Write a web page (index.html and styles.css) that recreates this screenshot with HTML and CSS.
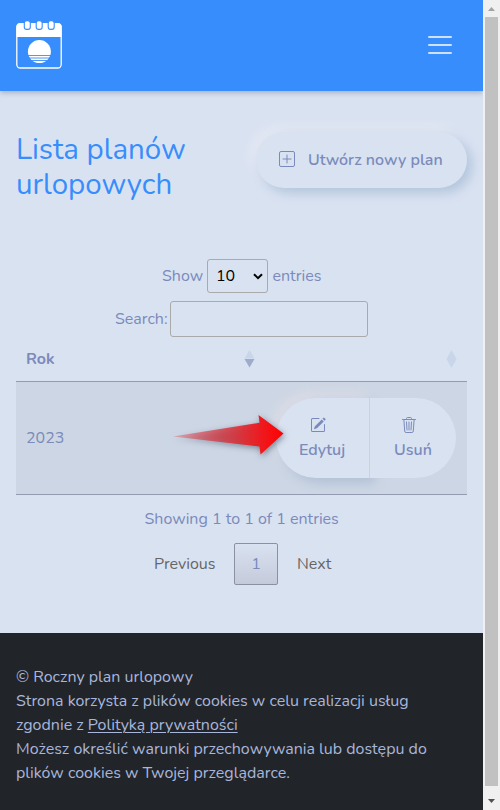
FILE: index.html
```html
<!DOCTYPE html>
<html lang="pl">
<head>
<meta charset="utf-8">
<title>Lista planów urlopowych</title>
<link rel="stylesheet" href="styles.css">
</head>
<body>
<div class="page">
  <header class="navbar">
    <svg class="logo" width="46" height="50" viewBox="0 0 46 50">
      <rect x=".8" y="3.800" width="44.400" height="44.200" rx="3.500" fill="none" stroke="#fff" stroke-width="1.300"/>
      <path d="M.5 17V6.500Q.5 3 4 3H42Q45.500 3 45.500 6.500V17Z" fill="#fff"/>
      <g fill="#fff" stroke="#388dfc" stroke-width="1.100">
        <rect x="8.300" y=".6" width="6" height="8.800" rx="2.500"/>
        <rect x="20.200" y=".6" width="6" height="8.800" rx="2.500"/>
        <rect x="32.200" y=".6" width="6" height="8.800" rx="2.500"/>
      </g>
      <circle cx="23.400" cy="31.600" r="11.500" fill="#fff"/>
      <path d="M11 35.500H36M11 38H36M11 40.500H36" stroke="#388dfc" stroke-width=".9"/>
    </svg>
    <button class="toggler" aria-label="Menu"><span></span><span></span><span></span></button>
  </header>

  <main class="content">
    <div class="title-row">
      <h1>Lista planów urlopowych</h1>
      <a class="btn-new">
        <svg width="16" height="16" viewBox="0 0 16 16" fill="none" stroke="currentColor"><rect x=".5" y=".5" width="15" height="15" rx="1.500"/><path d="M8 4v8M4 8h8" stroke-linecap="round"/></svg>
        <span>Utwórz nowy plan</span>
      </a>
    </div>

    <div class="length-row">
      <span class="t-show">Show</span>
      <div class="select"><span>10</span><svg width="10" height="7" viewBox="0 0 10 7"><path d="M1 1.200l4 4 4-4" fill="none" stroke="#000" stroke-width="2"/></svg></div>
      <span class="t-entries">entries</span>
    </div>
    <div class="search-row"><span class="t-search">Search:</span><input type="text" aria-label="Search"></div>

    <div class="table">
      <div class="thead">
        <div class="th"><span>Rok</span><svg width="11" height="18" viewBox="0 0 11 18"><path d="M5.500 0L10.500 8.500H.5Z" fill="#c9d5e8"/><path d="M5.500 17.500L10.500 9H.5Z" fill="#9eabcc"/></svg></div>
        <div class="th"><span></span><svg width="11" height="18" viewBox="0 0 11 18"><path d="M5.500 0L10.500 9L5.500 18L.5 9Z" fill="#c9d5e8"/></svg></div>
      </div>
      <div class="row">
        <span>2023</span>
        <div class="actions">
          <a class="action edit">
            <svg width="16" height="16" viewBox="0 0 16 16" fill="currentColor"><path d="M15.502 1.940a.5.5 0 0 1 0 .706L14.459 3.690l-2-2L13.502.646a.5.5 0 0 1 .707 0l1.293 1.293zm-1.750 2.456-2-2L4.939 9.210a.5.5 0 0 0-.121.196l-.805 2.414a.25.25 0 0 0 .316.316l2.414-.805a.5.5 0 0 0 .196-.12l6.813-6.814z"/><path fill-rule="evenodd" d="M1 13.500A1.500 1.500 0 0 0 2.500 15h11a1.500 1.500 0 0 0 1.500-1.500v-6a.5.5 0 0 0-1 0v6a.5.5 0 0 1-.5.5h-11a.5.5 0 0 1-.5-.5v-11a.5.5 0 0 1 .5-.5H9a.5.5 0 0 0 0-1H2.500A1.500 1.500 0 0 0 1 2.500v11z"/></svg>
            <span>Edytuj</span>
          </a>
          <a class="action delete">
            <svg width="16" height="16" viewBox="0 0 16 16" fill="none" stroke="currentColor" stroke-linecap="round" stroke-linejoin="round"><path d="M1.500 2.500h13M5.500 2.300V1.500a1 1 0 0 1 1-1h3a1 1 0 0 1 1 1v.8M2.900 2.700l.8 11.400a1.400 1.400 0 0 0 1.400 1.400h5.800a1.400 1.400 0 0 0 1.400-1.400l.8-11.400M5.500 5l.5 8M8 5v8M10.500 5l-.5 8"/></svg>
            <span>Usuń</span>
          </a>
        </div>
        <svg class="pointer" width="126" height="56" viewBox="0 0 126 56">
          <defs><linearGradient id="red"><stop offset="0" stop-color="#e8222c" stop-opacity=".25"/><stop offset=".5" stop-color="#d8323a" stop-opacity=".82"/><stop offset=".8" stop-color="#ee1a1e"/><stop offset="1" stop-color="#f00"/></linearGradient></defs>
          <path d="M8 28.500L94.500 14.800L93.500 7L118.500 25.500L95.500 46.500L94.500 38.500Z" fill="url(#red)"/>
        </svg>
      </div>
    </div>

    <div class="info">Showing 1 to 1 of 1 entries</div>
    <div class="pager"><span class="prev">Previous</span><span class="current">1</span><span class="next">Next</span></div>
  </main>

  <footer class="footer">
    <div>© Roczny plan urlopowy</div>
    <div>Strona korzysta z plików cookies w celu realizacji usług</div>
    <div>zgodnie z <a>Polityką prywatności</a></div>
    <div>Możesz określić warunki przechowywania lub dostępu do</div>
    <div>plików cookies w Twojej przeglądarce.</div>
  </footer>
</div>
<div class="scrollbar">
  <svg width="7" height="4" viewBox="0 0 7 4"><path d="M3.500 0L7 4H0Z" fill="#a3a3a3"/></svg>
  <div class="thumb"></div>
  <svg width="7" height="4" viewBox="0 0 7 4"><path d="M3.500 4L7 0H0Z" fill="#505050"/></svg>
</div>
</body>
</html>
```
FILE: styles.css
```css
* { box-sizing: border-box; }
body {
  margin: 0;
  width: 500px;
  height: 810px;
  display: grid;
  grid-template-columns: 483px 17px;
  overflow: hidden;
  background: #d9e2f1;
  color: #7b8abb;
  font: 16px/24px Nunito, Lato, "Open Sans", sans-serif;
  white-space: nowrap;
}
.page { display: flex; flex-direction: column; height: 810px; min-width: 0; }
.navbar {
  height: 91px;
  flex: none;
  padding: 20px 31px 0 16px;
  display: flex;
  justify-content: space-between;
  background: #388dfc;
  box-shadow: 0 2px 5px rgba(80, 90, 120, .35);
}
.toggler {
  display: flex;
  flex-direction: column;
  gap: 6px;
  width: 24px;
  height: 18px;
  margin-top: 16px;
  padding: 0;
  border: 0;
  background: none;
}
.toggler span { height: 2px; border-radius: 1px; background: #cde1fc; }
.content { height: 542px; flex: none; padding: 41px 16px 0; }
.title-row { display: flex; justify-content: space-between; height: 127px; }
h1 { margin: 0; width: 200px; white-space: normal; font-size: 29.500px; line-height: 35px; font-weight: 400; color: #388dfc; }
.btn-new {
  width: 211px;
  height: 56px;
  padding-left: 23px;
  display: flex;
  align-items: center;
  gap: 13px;
  border-radius: 28px;
  background: #d9e2f1;
  box-shadow: 5px 5px 12px #b2c5dc, -5px -5px 12px #e6e9f4;
  font-weight: 600;
}
.btn-new svg { margin-top: -2px; }
.length-row { display: flex; align-items: center; height: 34px; padding-left: 146px; }
.t-show { width: 45px; }
.select {
  width: 61px;
  height: 34px;
  padding: 0 4px 0 8px;
  display: flex;
  align-items: center;
  justify-content: space-between;
  border: 1px solid #aaa;
  border-radius: 3px;
  color: #000;
}
.t-entries { margin-left: 4.500px; }
.search-row { display: flex; align-items: center; height: 36px; margin-top: 8px; padding-left: 99px; }
.t-search { width: 55px; }
input { width: 198px; height: 36px; border: 1px solid #aaa; border-radius: 3px; background: transparent; }
.thead { display: flex; height: 45px; border-bottom: 1px solid #929bb0; }
.th { display: flex; justify-content: space-between; align-items: center; height: 43px; font-weight: 700; }
.th:first-child { width: 239px; padding-left: 10px; }
.th:last-child { flex: 1; padding-right: 10px; }
.row {
  position: relative;
  display: flex;
  align-items: center;
  justify-content: space-between;
  height: 113px;
  padding: 0 11px 0 10px;
  border-bottom: 1px solid #929bb0;
  background: #cdd6e4;
}
.actions { display: flex; width: 180px; height: 80px; }
.action { display: flex; flex-direction: column; align-items: center; gap: 5px; padding-top: 19px; background: #d9e2f1; font-weight: 600; }
.action svg { display: block; margin-left: -8px; }
.edit { width: 94px; padding-right: 1px; border-right: 1px solid #c6d3e6; border-radius: 40px 0 0 40px; box-shadow: 5px 5px 12px #b0c0d5, -5px -5px 12px #dcdde6; }
.edit svg { margin-left: -9px; }
.delete { position: relative; width: 86px; border-radius: 0 40px 40px 0; }
.pointer { position: absolute; left: 149px; top: 26px; filter: drop-shadow(1px 2px 3px rgba(70, 80, 100, .65)); }
.info { height: 24px; margin-top: 12px; padding-left: 128.500px; }
.pager { display: flex; align-items: center; height: 42px; margin-top: 12px; padding-left: 138px; color: #666; }
.prev { width: 80px; }
.current { width: 44px; height: 42px; line-height: 40px; text-align: center; border: 1px solid #8a929f; border-radius: 2px; background: linear-gradient(#d9e2f1, #c4cad9); color: #7b8abb; }
.next { margin-left: 19px; }
.footer { height: 177px; padding: 32px 16px 0; background: #212529; color: #a9b6db; }
.footer a { text-decoration: underline; text-underline-offset: 2px; text-decoration-thickness: 1px; }
.scrollbar { height: 810px; display: flex; flex-direction: column; align-items: center; background: #f0f0f0; padding: 7px 0; }
.thumb { width: 13px; height: 769px; margin: 6px 0 13px; flex: none; background: #c1c1c1; }
```
